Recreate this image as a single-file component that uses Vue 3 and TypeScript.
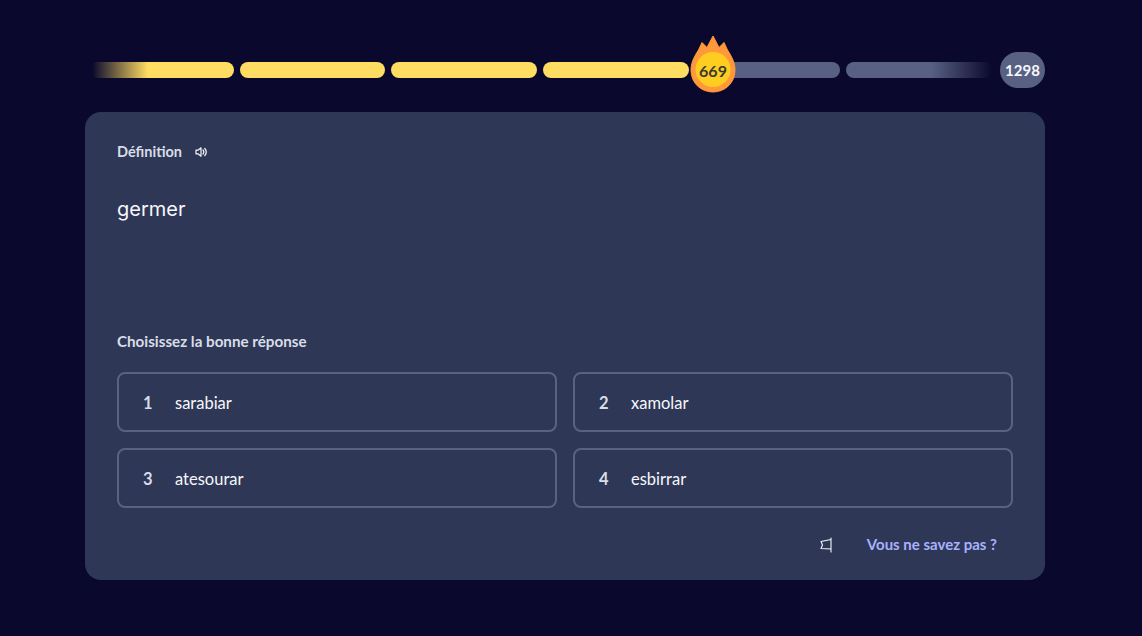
<script setup lang="ts">
const segments = [
  { id: 1, kind: 'fade-in' },
  { id: 2, kind: 'done' },
  { id: 3, kind: 'done' },
  { id: 4, kind: 'done' },
  { id: 5, kind: 'todo' },
  { id: 6, kind: 'fade-out' }
]

const answers = [
  { key: 1, label: 'sarabiar' },
  { key: 2, label: 'xamolar' },
  { key: 3, label: 'atesourar' },
  { key: 4, label: 'esbirrar' }
]
</script>

<template>
  <div class="shell">
    <main class="page">
      <div class="progress">
        <div class="track">
          <span v-for="s in segments" :key="s.id" class="segment" :class="s.kind"></span>
          <div class="flame">
            <svg width="44" height="57" viewBox="0 0 44 57">
              <path
                d="M22 0 L28 11.500 L33 6.500 L36.500 14 C41 21 44 27 44 34 C44 47 34 56 22 56 C10 56 0 47 0 34 C0 27 3 21 7.500 14 L11 6.500 L16 11.500 Z"
                fill="#ff983a"
                stroke="#ff983a"
                stroke-linejoin="round"
              />
              <circle cx="22" cy="33.500" r="17.500" fill="#ffcd1f" />
            </svg>
            <span class="flame-count">669</span>
          </div>
        </div>
        <span class="total">1298</span>
      </div>

      <section class="card">
        <div class="prompt-head">
          <span class="prompt-label">Définition</span>
          <svg class="sound" width="14" height="14" viewBox="0 0 14 14" fill="none" stroke="#f6f7fb" stroke-width="1.2">
            <path d="M2 5.200 H4 L7 2.800 V11.200 L4 8.800 H2 Z" stroke-linejoin="round" />
            <path d="M9 5 C10 6.200 10 7.800 9 9" stroke-linecap="round" />
            <path d="M10.800 3.500 C12.600 5.600 12.600 8.400 10.800 10.500" stroke-linecap="round" />
          </svg>
        </div>
        <div class="word">germer</div>

        <div class="choose">Choisissez la bonne réponse</div>
        <div class="answers">
          <button v-for="a in answers" :key="a.key" class="answer">
            <span class="answer-key">{{ a.key }}</span>
            <span>{{ a.label }}</span>
          </button>
        </div>

        <div class="actions">
          <svg width="14" height="16" viewBox="0 0 14 16" fill="none" stroke="#f6f7fb" stroke-width="1.1">
            <path d="M12 1 V15" stroke-linecap="round" />
            <path d="M12 2.500 L2 4.500 L3.500 8 L2 11.500 L12 12" stroke-linejoin="round" />
          </svg>
          <a class="skip">Vous ne savez pas ?</a>
        </div>
      </section>
    </main>
  </div>
</template>

<style>
html,
body {
  background: #0a092d;
}
</style>

<style scoped>
.shell {
  padding-right: 12px;
}
.page {
  width: 960px;
  margin: 0 auto;
  padding-top: 52px;
  font-family: Lato, 'Liberation Sans', sans-serif;
  color: #f6f7fb;
}
.progress {
  display: flex;
  align-items: center;
  gap: 8px;
  height: 36px;
  padding-left: 3px;
}
.track {
  position: relative;
  flex: 1;
  display: flex;
  gap: 6px;
}
.segment {
  flex: 1;
  height: 16px;
  border-radius: 8px;
}
.done {
  background: #ffdc62;
}
.todo {
  background: #586184;
}
.fade-in {
  background: linear-gradient(90deg, #ffdc6200 3%, #ffdc62 41%);
}
.fade-out {
  background: linear-gradient(90deg, #586184 58%, #58618400 100%);
}
.flame {
  position: absolute;
  left: 603px;
  top: -26px;
  width: 44px;
  height: 57px;
}
.flame svg {
  display: block;
  overflow: visible;
}
.flame-count {
  position: absolute;
  left: 0;
  right: 0;
  top: 26px;
  text-align: center;
  font-size: 16px;
  line-height: 18px;
  font-weight: 700;
  color: #3a3a38;
}
.total {
  width: 45px;
  height: 36px;
  border-radius: 18px;
  background: #586184;
  font-size: 15px;
  font-weight: 700;
  line-height: 36px;
  text-align: center;
}
.card {
  margin-top: 24px;
  height: 468px;
  box-sizing: border-box;
  padding: 31px 32px 0;
  border-radius: 16px;
  background: #2e3856;
  display: flex;
  flex-direction: column;
}
.prompt-head {
  display: flex;
  align-items: center;
  gap: 12px;
  height: 18px;
}
.prompt-label,
.choose {
  font-weight: 700;
  line-height: 18px;
  color: #d9dde8;
}
.prompt-label {
  font-size: 14.5px;
}
.choose {
  font-size: 15.2px;
  margin-top: 109px;
}
.sound {
  display: block;
}
.word {
  margin-top: 34px;
  font-size: 20px;
  line-height: 28px;
  font-family: Inter, sans-serif;
  color: #f6f7fb;
}
.answers {
  margin-top: 22px;
  display: grid;
  grid-template-columns: 1fr 1fr;
  gap: 16px;
}
.answer {
  display: flex;
  align-items: center;
  height: 60px;
  box-sizing: border-box;
  padding: 1px 24px 0;
  background: transparent;
  border: 2px solid #586380;
  border-radius: 8px;
  font: inherit;
  font-size: 16.5px;
  color: #f6f7fb;
  text-align: left;
}
.answer-key {
  width: 32px;
  text-align: left;
  font-weight: 700;
  color: #d9dde8;
}
.actions {
  margin-top: 28px;
  display: flex;
  align-items: center;
  justify-content: flex-end;
  gap: 34px;
  padding-right: 16px;
}
.skip {
  font-size: 15px;
  font-weight: 700;
  line-height: 17px;
  color: #a8b1ff;
}
</style>
